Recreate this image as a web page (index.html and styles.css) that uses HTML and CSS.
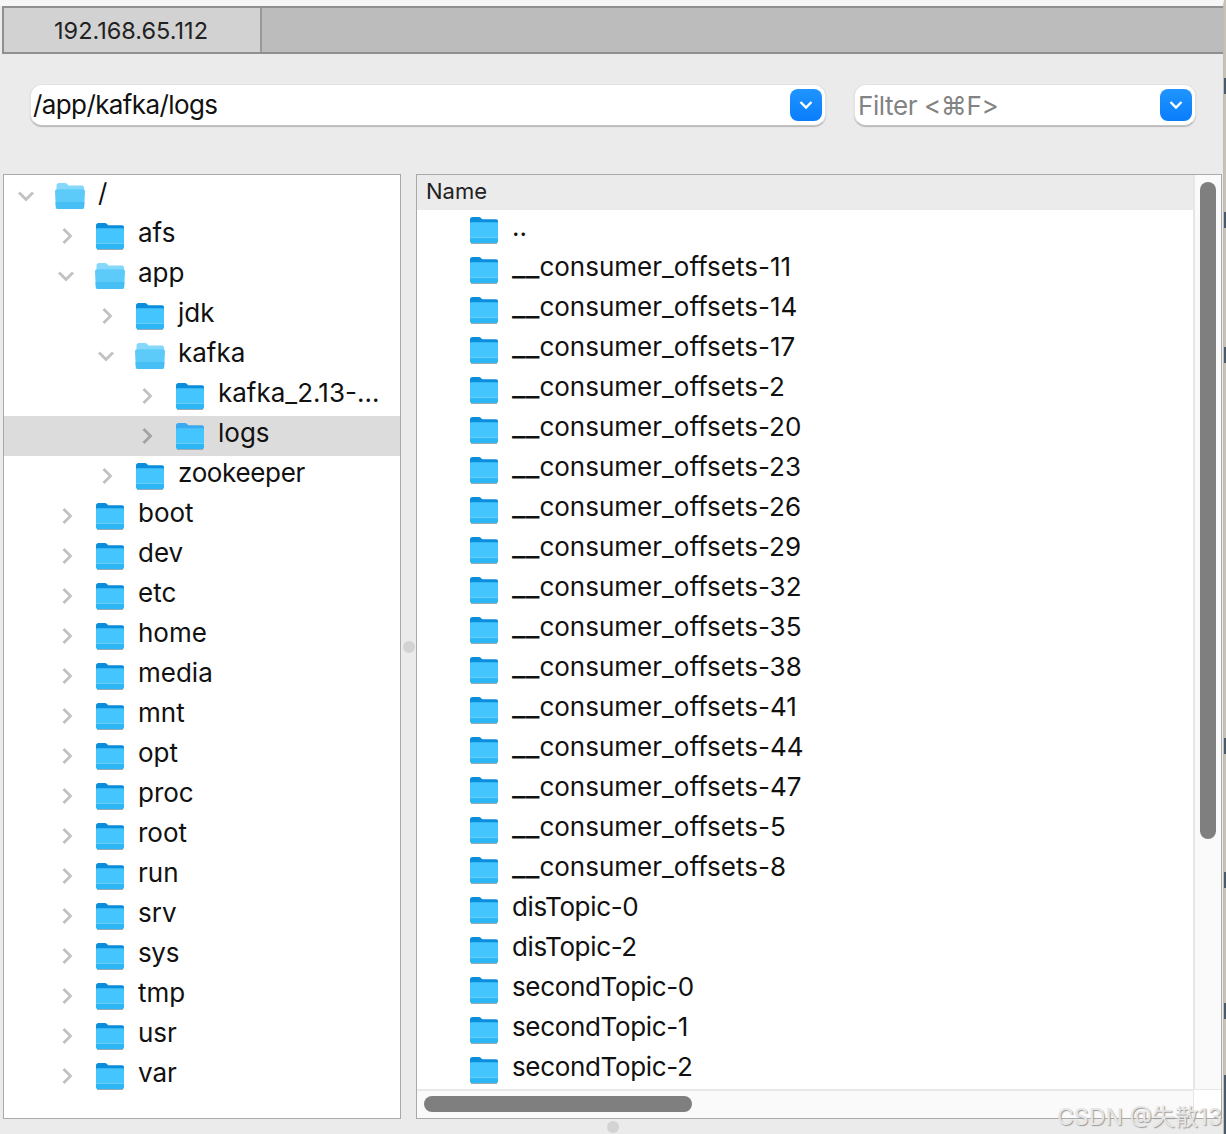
FILE: index.html
```html
<!DOCTYPE html>
<html lang="en">
<head>
    <meta charset="UTF-8">
    <title>192.168.65.112</title>
    <link rel="stylesheet" href="styles.css">
</head>
<body>
    <svg class="defs" width="0" height="0">
        <symbol id="closed" viewBox="0 0 30 28">
            <path d="M1 3.500C1 2 2 1 3.500 1h6.300c1 0 1.600.4 2.200 1l1.200 1.300H27c1.200 0 2 .8 2 2V10H1z" fill="var(--tab, #0a8ddb)"/>
            <path d="M1 7.500c0-.8.6-1.300 1.400-1.300h25.200c.8 0 1.400.5 1.400 1.300V25c0 1.200-.8 2-2 2H3c-1.200 0-2-.8-2-2z" fill="#44c5fe"/>
            <path d="M1 21.500h28V25c0 1.200-.8 2-2 2H3c-1.200 0-2-.8-2-2z" fill="#2cb6f6"/>
            <path d="M1 21.500h28" stroke="#7bd6fb" stroke-width=".7"/>
            <path d="M2 27.500h26" stroke="#9aa9b3" stroke-width="1"/>
        </symbol>
        <symbol id="open" viewBox="0 0 32 28">
            <path d="M2.500 3.500C2.500 2 3.500 1 5 1h6c1 0 1.600.4 2.200 1l1.300 1.500H28c1.200 0 2 .8 2 2V10H2.500z" fill="#86d8fb"/>
            <path d="M1 9.500C1 8 2 7.200 3.200 7.200h25.600c1.200 0 2.200.8 2.200 2.300l-.8 15.500c-.1 1.200-.9 2-2.100 2H3.900c-1.200 0-2-.8-2.100-2z" fill="#5ccbfa"/>
            <path d="M1.600 20h28.800l-.3 5c-.1 1.200-.9 2-2.100 2H3.900c-1.200 0-2-.8-2.100-2z" fill="#47bff5"/>
        </symbol>
        <symbol id="right" viewBox="0 0 12 18">
            <path d="M2.500 2l7 7-7 7" fill="none" stroke="currentColor" stroke-width="2.800"/>
        </symbol>
        <symbol id="down" viewBox="0 0 18 12">
            <path d="M2 2.500l7 7 7-7" fill="none" stroke="currentColor" stroke-width="2.800"/>
        </symbol>
        <symbol id="drop" viewBox="0 0 14 10">
            <path d="M1.500 2l5.500 5.500L12.500 2" fill="none" stroke="#fff" stroke-width="2.400"/>
        </symbol>
    </svg>

    <div class="window">
        <div class="tabs">
            <div class="tab">192.168.65.112</div>
        </div>

        <div class="filters">
            <div class="combo path">
                <span class="combo-text">/app/kafka/logs</span>
                <span class="drop"><svg><use href="#drop"/></svg></span>
            </div>
            <div class="combo filter">
                <span class="combo-text hint">Filter &lt;⌘F&gt;</span>
                <span class="drop"><svg><use href="#drop"/></svg></span>
            </div>
        </div>

        <div class="panes">
            <div class="tree">
                <div class="row lvl-0"><svg class="chev-d"><use href="#down"/></svg><svg class="folder-o"><use href="#open"/></svg><span>/</span></div>
                <div class="row lvl-1"><svg class="chev-r"><use href="#right"/></svg><svg class="folder"><use href="#closed"/></svg><span>afs</span></div>
                <div class="row lvl-1"><svg class="chev-d"><use href="#down"/></svg><svg class="folder-o"><use href="#open"/></svg><span>app</span></div>
                <div class="row lvl-2"><svg class="chev-r"><use href="#right"/></svg><svg class="folder"><use href="#closed"/></svg><span>jdk</span></div>
                <div class="row lvl-2"><svg class="chev-d"><use href="#down"/></svg><svg class="folder-o"><use href="#open"/></svg><span>kafka</span></div>
                <div class="row lvl-3"><svg class="chev-r"><use href="#right"/></svg><svg class="folder"><use href="#closed"/></svg><span>kafka_2.13-...</span></div>
                <div class="row lvl-3 selected"><svg class="chev-r"><use href="#right"/></svg><svg class="folder"><use href="#closed"/></svg><span>logs</span></div>
                <div class="row lvl-2"><svg class="chev-r"><use href="#right"/></svg><svg class="folder"><use href="#closed"/></svg><span class="tight">zookeeper</span></div>
                <div class="row lvl-1"><svg class="chev-r"><use href="#right"/></svg><svg class="folder"><use href="#closed"/></svg><span>boot</span></div>
                <div class="row lvl-1"><svg class="chev-r"><use href="#right"/></svg><svg class="folder"><use href="#closed"/></svg><span>dev</span></div>
                <div class="row lvl-1"><svg class="chev-r"><use href="#right"/></svg><svg class="folder"><use href="#closed"/></svg><span>etc</span></div>
                <div class="row lvl-1"><svg class="chev-r"><use href="#right"/></svg><svg class="folder"><use href="#closed"/></svg><span>home</span></div>
                <div class="row lvl-1"><svg class="chev-r"><use href="#right"/></svg><svg class="folder"><use href="#closed"/></svg><span>media</span></div>
                <div class="row lvl-1"><svg class="chev-r"><use href="#right"/></svg><svg class="folder"><use href="#closed"/></svg><span>mnt</span></div>
                <div class="row lvl-1"><svg class="chev-r"><use href="#right"/></svg><svg class="folder"><use href="#closed"/></svg><span>opt</span></div>
                <div class="row lvl-1"><svg class="chev-r"><use href="#right"/></svg><svg class="folder"><use href="#closed"/></svg><span>proc</span></div>
                <div class="row lvl-1"><svg class="chev-r"><use href="#right"/></svg><svg class="folder"><use href="#closed"/></svg><span>root</span></div>
                <div class="row lvl-1"><svg class="chev-r"><use href="#right"/></svg><svg class="folder"><use href="#closed"/></svg><span>run</span></div>
                <div class="row lvl-1"><svg class="chev-r"><use href="#right"/></svg><svg class="folder"><use href="#closed"/></svg><span>srv</span></div>
                <div class="row lvl-1"><svg class="chev-r"><use href="#right"/></svg><svg class="folder"><use href="#closed"/></svg><span class="tight">sys</span></div>
                <div class="row lvl-1"><svg class="chev-r"><use href="#right"/></svg><svg class="folder"><use href="#closed"/></svg><span>tmp</span></div>
                <div class="row lvl-1"><svg class="chev-r"><use href="#right"/></svg><svg class="folder"><use href="#closed"/></svg><span>usr</span></div>
                <div class="row lvl-1"><svg class="chev-r"><use href="#right"/></svg><svg class="folder"><use href="#closed"/></svg><span>var</span></div>
            </div>

            <div class="splitter"><span class="dot"></span></div>

            <div class="files">
                <div class="files-main">
                    <div class="files-list">
                        <div class="files-head">Name</div>
                        <div class="row file"><svg class="folder"><use href="#closed"/></svg><span>..</span></div>
                        <div class="row file"><svg class="folder"><use href="#closed"/></svg><span><i>__</i>consumer_offsets-11</span></div>
                        <div class="row file"><svg class="folder"><use href="#closed"/></svg><span><i>__</i>consumer_offsets-14</span></div>
                        <div class="row file"><svg class="folder"><use href="#closed"/></svg><span><i>__</i>consumer_offsets-17</span></div>
                        <div class="row file"><svg class="folder"><use href="#closed"/></svg><span><i>__</i>consumer_offsets-2</span></div>
                        <div class="row file"><svg class="folder"><use href="#closed"/></svg><span><i>__</i>consumer_offsets-20</span></div>
                        <div class="row file"><svg class="folder"><use href="#closed"/></svg><span><i>__</i>consumer_offsets-23</span></div>
                        <div class="row file"><svg class="folder"><use href="#closed"/></svg><span><i>__</i>consumer_offsets-26</span></div>
                        <div class="row file"><svg class="folder"><use href="#closed"/></svg><span><i>__</i>consumer_offsets-29</span></div>
                        <div class="row file"><svg class="folder"><use href="#closed"/></svg><span><i>__</i>consumer_offsets-32</span></div>
                        <div class="row file"><svg class="folder"><use href="#closed"/></svg><span><i>__</i>consumer_offsets-35</span></div>
                        <div class="row file"><svg class="folder"><use href="#closed"/></svg><span><i>__</i>consumer_offsets-38</span></div>
                        <div class="row file"><svg class="folder"><use href="#closed"/></svg><span><i>__</i>consumer_offsets-41</span></div>
                        <div class="row file"><svg class="folder"><use href="#closed"/></svg><span><i>__</i>consumer_offsets-44</span></div>
                        <div class="row file"><svg class="folder"><use href="#closed"/></svg><span><i>__</i>consumer_offsets-47</span></div>
                        <div class="row file"><svg class="folder"><use href="#closed"/></svg><span><i>__</i>consumer_offsets-5</span></div>
                        <div class="row file"><svg class="folder"><use href="#closed"/></svg><span><i>__</i>consumer_offsets-8</span></div>
                        <div class="row file"><svg class="folder"><use href="#closed"/></svg><span class="tight">disTopic-0</span></div>
                        <div class="row file"><svg class="folder"><use href="#closed"/></svg><span class="tight">disTopic-2</span></div>
                        <div class="row file"><svg class="folder"><use href="#closed"/></svg><span class="tight">secondTopic-0</span></div>
                        <div class="row file"><svg class="folder"><use href="#closed"/></svg><span class="tight">secondTopic-1</span></div>
                        <div class="row file"><svg class="folder"><use href="#closed"/></svg><span class="tight">secondTopic-2</span></div>
                    </div>
                    <div class="vbar"><div class="vthumb"></div></div>
                </div>
                <div class="hbar"><div class="hthumb"></div><div class="corner"></div></div>
            </div>
        </div>

        <div class="bottom"><span class="dot"></span></div>
    </div>

    <div class="edge"></div>
    <div class="watermark">CSDN @失散13</div>
</body>
</html>
```

FILE: styles.css
```css
* {
    box-sizing: border-box;
}

html, body {
    margin: 0;
    padding: 0;
    height: 100%;
    overflow: hidden;
}

body {
    font-family: Inter, 'Noto Sans CJK SC', 'DejaVu Sans', sans-serif;
    background: #ebebeb;
    color: #111;
    position: relative;
}

.defs {
    position: absolute;
}

.window {
    width: 1224px;
    height: 1134px;
    border-top: 6px solid #f6f6f6;
    border-right: 1px solid #bdbdbd;
}

.tabs {
    margin-left: 2px;
    height: 48px;
    display: flex;
    background: #bcbcbc;
    border: 2px solid #8f8f8f;
    border-right: 0;
}

.tab {
    width: 258px;
    background: #d2d2d2;
    border-right: 2px solid #9a9a9a;
    font-size: 23.5px;
    color: #222;
    display: flex;
    align-items: center;
    justify-content: center;
    padding-right: 2px;
}

.filters {
    display: flex;
    gap: 28px;
    padding: 30px 0 0 30px;
    height: 120px;
}

.combo {
    height: 42px;
    display: flex;
    align-items: center;
    justify-content: space-between;
    background: #fff;
    border: 1px solid #e2e2e2;
    border-bottom-color: #c4c4c4;
    border-radius: 12px;
    box-shadow: 0 1px 1px 0 #b5b5b5;
    padding: 0 3px;
    font-size: 26px;
    letter-spacing: -0.6px;
}

.path {
    width: 796px;
}

.filter {
    width: 342px;
}

.combo-text {
    position: relative;
    top: -1px;
    left: -1px;
}

.hint {
    color: #838383;
    top: 0;
    left: 0;
    letter-spacing: -0.4px;
}

.drop {
    width: 32px;
    height: 32px;
    border-radius: 8px;
    background: linear-gradient(#1f95ff, #0a7dfb);
    display: flex;
    align-items: center;
    justify-content: center;
}

.drop svg {
    width: 14px;
    height: 10px;
}

.panes {
    display: flex;
    height: 945px;
    padding-left: 3px;
}

.tree {
    width: 398px;
    background: #fff;
    border: 1px solid #a9a9a9;
    padding-top: 1px;
    overflow: hidden;
}

.splitter {
    width: 15px;
    display: flex;
    align-items: center;
    justify-content: center;
}

.dot {
    display: block;
    width: 12px;
    height: 12px;
    border-radius: 50%;
    background: #d3d3d3;
}

.files {
    width: 806px;
    background: #fff;
    border: 1px solid #a9a9a9;
    display: flex;
    flex-direction: column;
}

.files-main {
    flex: 1;
    display: flex;
    min-height: 0;
}

.files-list {
    flex: 1;
    overflow: hidden;
}

.files-head {
    height: 35px;
    background: #ebebeb;
    font-size: 22px;
    color: #222;
    padding: 1px 0 0 9px;
    line-height: 30px;
}

.vbar {
    width: 28px;
    background: #fafafa;
    border-left: 2px solid #e6e6e6;
    padding: 7px 0 0 5px;
}

.vthumb {
    width: 16px;
    height: 657px;
    border-radius: 8px;
    background: #7f7f7f;
}

.hbar {
    height: 29px;
    background: #fafafa;
    border-top: 2px solid #e8e8e8;
    display: flex;
    justify-content: space-between;
    padding: 5px 0 0 7px;
    position: relative;
}

.hthumb {
    width: 268px;
    height: 16px;
    border-radius: 8px;
    background: #7f7f7f;
}

.corner {
    position: absolute;
    right: 0;
    top: -2px;
    width: 28px;
    height: 29px;
    border-left: 1px solid #e6e6e6;
    border-top: 1px solid #e8e8e8;
    background: #fff;
}

.row {
    height: 40px;
    display: flex;
    align-items: center;
    font-size: 26px;
    white-space: nowrap;
}

.row span {
    position: relative;
    top: -4px;
    margin-left: 13px;
}

.row i {
    font-style: normal;
    font-size: 30px;
    line-height: 0;
}

.row .tight {
    letter-spacing: -0.35px;
}

.selected {
    background: #dcdcdc;
    --tab: #3aaaf0;
}

.lvl-0 { padding-left: 16px; }
.lvl-1 { padding-left: 56px; }
.lvl-2 { padding-left: 96px; }
.lvl-3 { padding-left: 136px; }

.file {
    padding-left: 52px;
}

.chev-r {
    width: 12px;
    height: 18px;
    margin: 0 22px 0 1px;
    color: #c2c2c2;
}

.selected .chev-r {
    color: #a3a3a3;
}

.chev-d {
    width: 18px;
    height: 12px;
    margin: 0 20px 0 -3px;
    color: #c2c2c2;
}

.folder {
    width: 30px;
    height: 28px;
}

.folder-o {
    width: 32px;
    height: 28px;
    margin-left: -1px;
    margin-right: -1px;
}

.bottom {
    display: flex;
    justify-content: center;
    padding: 2px 0 0 2px;
}

/* sliver of the desktop behind the window */
.edge {
    position: absolute;
    top: 0;
    right: 0;
    width: 2px;
    height: 100%;
    background: linear-gradient(#c7c2b3 0 78px, #4a5a68 78px 94px, #c7c2b3 94px 212px, #4a5a68 212px 228px, #c7c2b3 228px 347px, #4a5a68 347px 363px, #c7c2b3 363px 738px, #4a5a68 738px 754px, #c7c2b3 754px 872px, #4a5a68 872px 888px, #c7c2b3 888px 1003px, #4a5a68 1003px 1019px, #c7c2b3 1019px 1075px, #4a5a68 1075px);
}

.watermark {
    position: absolute;
    right: 4px;
    top: 1098px;
    font-size: 23.2px;
    color: #e6e6e6;
    text-shadow: 1px 1px 1px #9c9c9c;
}
```
